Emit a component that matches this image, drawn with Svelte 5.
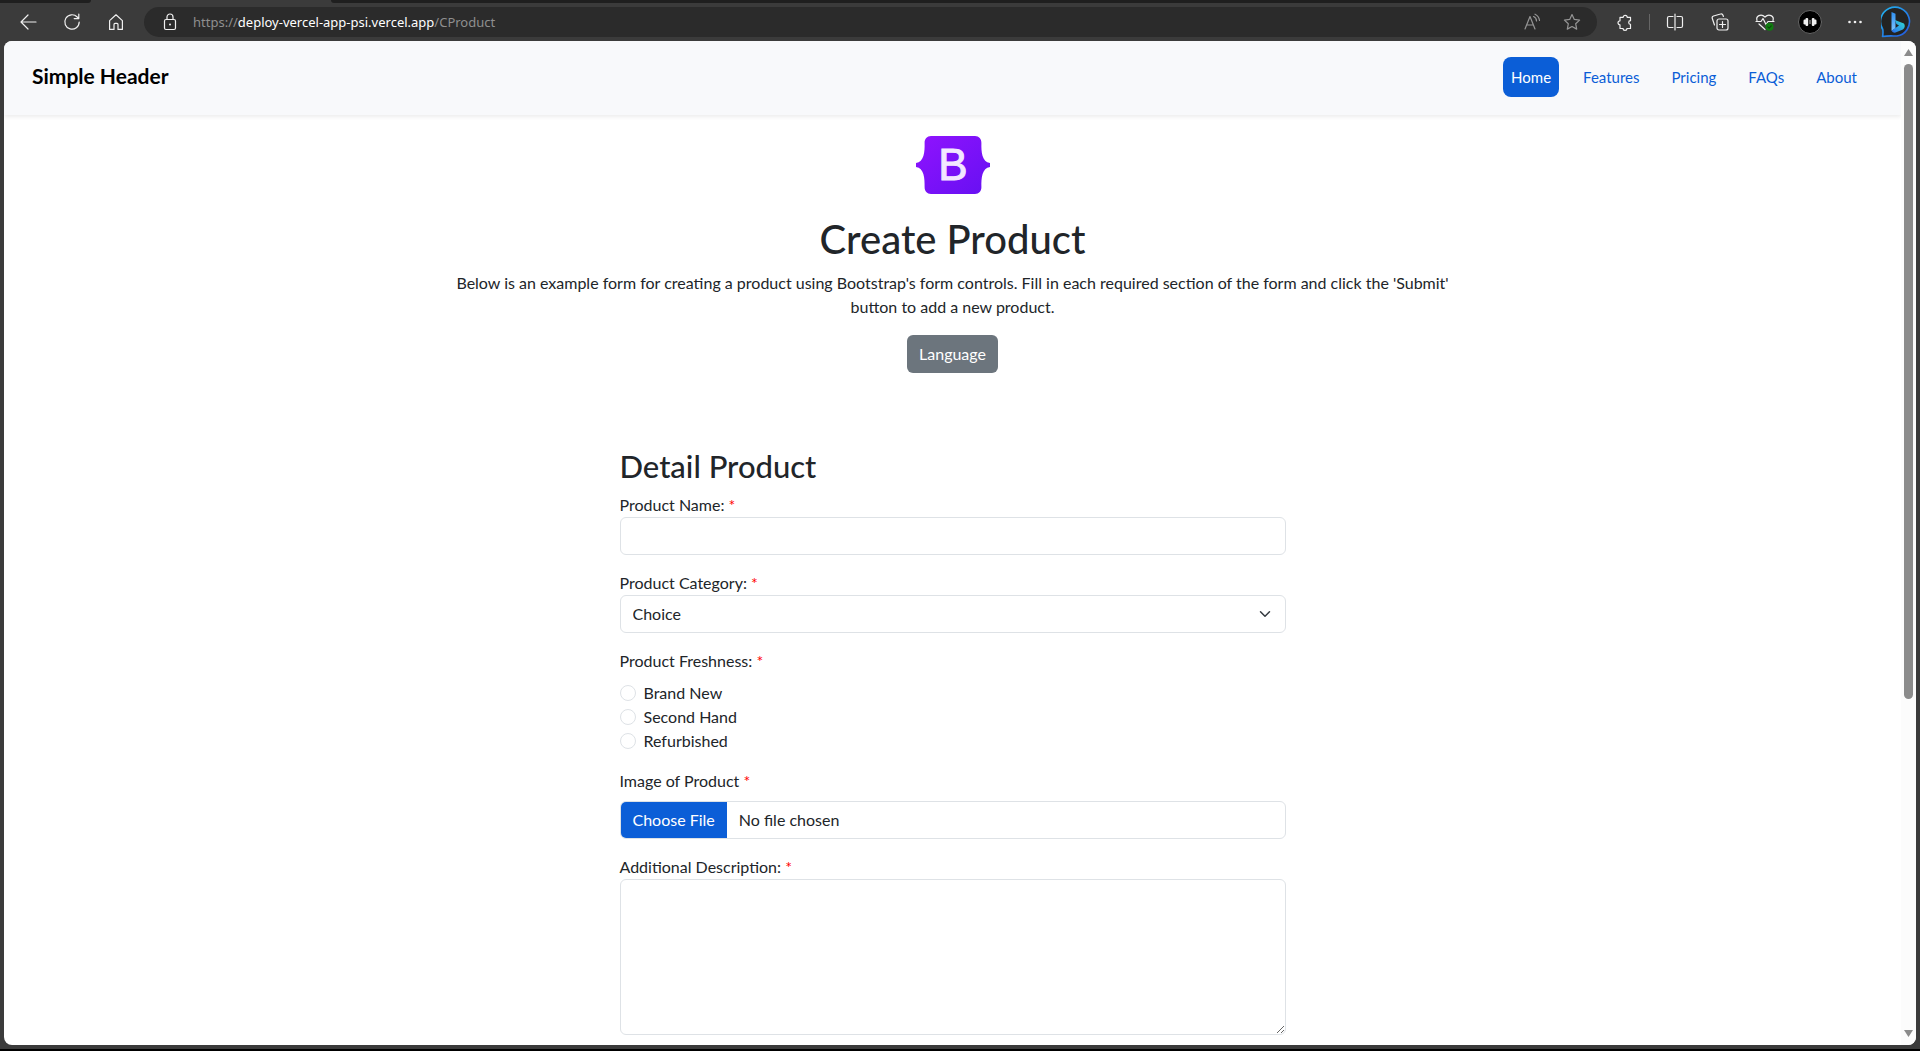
<script>
  const links = ['Home', 'Features', 'Pricing', 'FAQs', 'About'];
  const conditions = ['Brand New', 'Second Hand', 'Refurbished'];
  let active = $state('Home');
  let condition = $state('');
</script>

<div class="browser">
  <div class="tabstrip"><span class="tab-left"></span><span class="tab-gap"></span><span class="tab-right"></span></div>
  <div class="toolbar">
    <button class="tool" aria-label="Back">
      <svg width="18" height="18" viewBox="0 0 18 18"><path d="M17 9H2M9 2L2 9l7 7" /></svg>
    </button>
    <button class="tool" aria-label="Refresh">
      <svg width="18" height="18" viewBox="0 0 18 18"><path d="M16.2 9a7.2 7.2 0 1 1-2-5l1.4 1.4M15.8 1v4.6h-4.6" /></svg>
    </button>
    <button class="tool" aria-label="Home page">
      <svg width="18" height="18" viewBox="0 0 18 18"><path d="M2.6 7.6L9 1.8l6.4 5.8v8.8H11v-5a1 1 0 0 0-1-1H8a1 1 0 0 0-1 1v5H2.6z" /></svg>
    </button>
    <div class="address">
      <svg class="lock" width="16" height="18" viewBox="0 0 16 18"><rect x="2.5" y="6.5" width="11" height="10" rx="1.5" /><path d="M5 6.5V4a3 3 0 0 1 6 0v2.500" /><circle class="fill" cx="8" cy="11.500" r="1" /></svg>
      <span class="url">https://<b>deploy-vercel-app-psi.vercel.app</b>/CProduct</span>
      <button class="tool dim" aria-label="Read aloud">
        <svg width="18" height="18" viewBox="0 0 18 18"><path d="M2 16L7 3.500 12 16M3.600 12h6.800M10.500 3.500a5 5 0 0 1 3 4.500M12 1.200a8 8 0 0 1 4.500 6.300" /></svg>
      </button>
      <button class="tool dim" aria-label="Add to favorites">
        <svg width="18" height="18" viewBox="0 0 18 18"><path d="M9 1.500l2.300 4.900 5.300.7-3.900 3.700 1 5.300L9 13.500l-4.700 2.600 1-5.300L1.400 7.100l5.300-.7z" /></svg>
      </button>
    </div>
    <button class="tool ext" aria-label="Extensions">
      <svg width="18" height="18" viewBox="0 0 18 18"><path d="M4 4.300h3.200a2 2 0 1 1 4 0h3.300v3.400a1.800 1.800 0 1 0 0 3.600v4.200h-3.600a1.900 1.900 0 1 1-3.800 0H4v-3.700a2 2 0 1 1 0-4z" /></svg>
    </button>
    <span class="divider"></span>
    <button class="tool wide" aria-label="Split screen">
      <svg width="18" height="18" viewBox="0 0 18 18"><path d="M7 3.500H3a1.500 1.500 0 0 0-1.500 1.500v8A1.500 1.500 0 0 0 3 14.500h4M11 3.500h4a1.500 1.500 0 0 1 1.500 1.500v8a1.500 1.500 0 0 1-1.500 1.500h-4M9 1v16" /></svg>
    </button>
    <button class="tool wide" aria-label="Collections">
      <svg width="18" height="18" viewBox="0 0 18 18"><rect x="6" y="6" width="11" height="11" rx="2" /><path d="M11.500 8.500v6M8.500 11.500h6M3.500 12L1.300 5.500a2 2 0 0 1 1.200-2.500l7-2a2 2 0 0 1 2.500 1.200l.4 1.300" /></svg>
    </button>
    <button class="tool wide" aria-label="Browser essentials">
      <svg width="20" height="18" viewBox="0 0 20 18"><path d="M2 7.500C.5 3 6 .2 10 4c4-3.800 9.500-1 8 3.500M1 8.500h5l2-3 3 6 2-3h6M4 11l6 5.500" /><circle class="green" cx="14.500" cy="13.800" r="4" /><path class="tick" d="M12.800 13.800l1.300 1.300 2.200-2.200" /></svg>
    </button>
    <button class="tool wide" aria-label="Profile">
      <svg width="26" height="26" viewBox="0 0 26 26"><circle class="avatar" cx="13" cy="13" r="11.500" /><g class="fill"><rect x="6.500" y="10.500" width="3" height="5" rx="1.200" /><rect x="8.500" y="9" width="2.700" height="8" rx="1" /><rect x="16.500" y="10.500" width="3" height="5" rx="1.200" /><rect x="14.800" y="9" width="2.700" height="8" rx="1" /><rect x="12.600" y="11" width="0.800" height="4" /></g></svg>
    </button>
    <button class="tool wide" aria-label="Settings and more">
      <svg width="18" height="18" viewBox="0 0 18 18"><g class="fill"><circle cx="3.500" cy="9" r="1.300" /><circle cx="9" cy="9" r="1.300" /><circle cx="14.500" cy="9" r="1.300" /></g></svg>
    </button>
    <button class="tool bing" aria-label="Bing chat">
      <svg width="32" height="32" viewBox="0 0 32 32">
        <defs>
          <linearGradient id="ring" x1="0" y1="0" x2="1" y2="1"><stop offset="0" stop-color="#22b8f0" /><stop offset="1" stop-color="#2456e0" /></linearGradient>
          <linearGradient id="bolt" x1="0" y1="0" x2="0" y2="1"><stop offset="0" stop-color="#2f8ff0" /><stop offset="1" stop-color="#7cc4ff" /></linearGradient>
          <linearGradient id="bowl" x1="0" y1="1" x2="1" y2="0"><stop offset="0" stop-color="#2a6cf0" /><stop offset="1" stop-color="#30e0d0" /></linearGradient>
        </defs>
        <path class="bubble" d="M1.500 30.500c.8-3 .5-5 .3-7A14.500 14.500 0 1 1 16 30c-5 0-8-.5-14.500.5z" />
        <path fill="url(#bolt)" stroke="none" d="M10.500 6l4 1.700v14.500l-4 2.600z" />
        <path fill="url(#bowl)" stroke="none" d="M10.500 24.800l7.500-5.300-2.600-1.400-1.500-4 9 3.500c1.500 2 1 4.400-1 5.900L14.500 26.600q-2.500.4-4-1.800z" />
      </svg>
    </button>
  </div>

  <div class="window">
    <div class="page">
      <header>
        <a class="brand" href="#top">Simple Header</a>
        <nav>
          {#each links as link}
            <a href="#{link.toLowerCase()}" class:active={active === link} onclick={() => (active = link)}>{link}</a>
          {/each}
        </nav>
      </header>

      <main>
        <section class="intro">
          <svg class="logo" width="74" height="58" viewBox="0 0 74 58" role="img" aria-label="Bootstrap">
            <defs><linearGradient id="purple" x1="0" y1="0" x2="1" y2="1"><stop offset="0" stop-color="#9013fe" /><stop offset="1" stop-color="#6610f2" /></linearGradient></defs>
            <path fill="url(#purple)" d="M15 0h44c4 0 6.500 3 6.400 7-.2 9 .6 19 8.600 20v4c-8 1-8.800 11-8.600 20 .1 4-2.400 7-6.400 7H15c-4 0-6.500-3-6.400-7C8.800 42 8 32 0 31v-4c8-1 8.800-11 8.600-20C8.500 3 11 0 15 0z" />
            <text x="37" y="44" text-anchor="middle">B</text>
          </svg>
          <h1>Create Product</h1>
          <p>Below is an example form for creating a product using Bootstrap's form controls. Fill in each required section of the form and click the 'Submit' button to add a new product.</p>
          <button class="language">Language</button>
        </section>

        <form onsubmit={(e) => e.preventDefault()}>
          <h2>Detail Product</h2>
          <div class="field">
            <label for="name">Product Name: <span>*</span></label>
            <input class="control" id="name" type="text" />
          </div>
          <div class="field">
            <label for="category">Product Category: <span>*</span></label>
            <div class="select">
              <select class="control" id="category"><option>Choice</option></select>
              <svg width="12" height="12" viewBox="0 0 16 16"><path d="M2 5l6 6 6-6" /></svg>
            </div>
          </div>
          <fieldset class="field">
            <legend>Product Freshness: <span>*</span></legend>
            {#each conditions as item}
              <label class="choice"><input type="radio" name="freshness" value={item} bind:group={condition} />{item}</label>
            {/each}
          </fieldset>
          <div class="field">
            <label class="spaced" for="image">Image of Product <span>*</span></label>
            <input class="control" id="image" type="file" />
          </div>
          <div class="field">
            <label for="description">Additional Description: <span>*</span></label>
            <textarea class="control" id="description"></textarea>
          </div>
        </form>
      </main>
    </div>
    <div class="scrollbar">
      <svg width="9" height="7" viewBox="0 0 9 7"><path d="M4.500 0L9 7H0z" /></svg>
      <span class="track"><span class="thumb"></span></span>
      <svg width="9" height="7" viewBox="0 0 9 7"><path d="M0 0h9L4.500 7z" /></svg>
    </div>
  </div>
</div>

<style>
  :global(body) { background: #3b3b3b; }
  * { box-sizing: border-box; }
  .browser {
    display: flex;
    flex-direction: column;
    height: 100vh;
    overflow: hidden;
    background: #3b3b3b;
    border-bottom: 2px solid #000;
    font: 16px/24px Lato, sans-serif;
    color: #212529;
  }
  button { font: inherit; cursor: pointer; }

  .tabstrip { display: flex; height: 3px; flex: none; background: #3b3b3b; }
  .tab-left { width: 91px; border-bottom-right-radius: 3px; background: #1f1f1f; }
  .tab-gap { width: 240px; }
  .tab-right { flex: 1; border-bottom-left-radius: 3px; background: #1f1f1f; }

  .toolbar { display: flex; align-items: center; flex: none; height: 38px; padding: 0 3px 0 6px; }
  .tool {
    display: flex;
    align-items: center;
    justify-content: center;
    flex: none;
    width: 44px;
    height: 30px;
    padding: 0;
    border: 0;
    background: none;
    color: #f0f0f0;
  }
  .toolbar svg { fill: none; stroke: currentColor; stroke-width: 1.2; stroke-linejoin: round; stroke-linecap: round; }
  .toolbar svg .fill { fill: currentColor; stroke: none; }
  .toolbar svg .green { fill: #107c10; stroke: none; }
  .toolbar svg .tick { stroke: #0a4d0a; }
  .toolbar svg .avatar { fill: #000; stroke: #666; stroke-width: 1; }
  .toolbar svg .bubble { fill: #232323; stroke: url(#ring); stroke-width: 1.6; }
  .tool.dim { width: 40px; color: #959595; }
  .tool.wide { width: 45px; }
  .tool.ext { margin-left: 6px; }
  .tool.bing { width: 40px; }
  .divider { width: 1px; height: 16px; margin: 0 2px; background: #666; }
  .address {
    display: flex;
    align-items: center;
    flex: 1;
    min-width: 0;
    height: 30px;
    margin-left: 6px;
    padding: 0 5px 0 18px;
    border-radius: 15px;
    background: #2b2b2b;
    color: #f0f0f0;
  }
  .address .lock { flex: none; }
  .url { flex: 1; min-width: 0; margin-left: 15px; overflow: hidden; white-space: nowrap; font: 13px/20px "Noto Sans", sans-serif; color: #8f8f8f; }
  .url b { font-weight: 400; color: #fff; }

  .window { display: flex; flex: 1; min-height: 0; margin: 0 4px 4px; overflow: hidden; border-radius: 8px; background: #fff; }
  .page { flex: 1; min-width: 0; overflow: hidden; }
  .scrollbar { display: flex; flex-direction: column; align-items: center; flex: none; width: 15px; padding: 8px 0; background: #fcfcfc; }
  .scrollbar svg { flex: none; fill: #8b8b8b; }
  .track { flex: 1; width: 9px; padding: 8px 0 4px; }
  .thumb { display: block; height: 66%; border-radius: 5px; background: #8b8b8b; }

  header {
    display: flex;
    align-items: flex-start;
    justify-content: space-between;
    padding: 16px 36px 18px 28px;
    background: #f8f9fb;
    box-shadow: 0 2px 4px rgba(0, 0, 0, 0.075);
  }
  .brand { font-size: 21px; font-weight: 700; line-height: 38px; color: #000; text-decoration: none; }
  nav { display: flex; gap: 16px; font-size: 15px; }
  nav a { padding: 8px; border-radius: 8px; color: #0b5ed7; text-decoration: none; }
  nav a.active { background: #0b5ed7; color: #fff; }

  main { display: flex; flex-direction: column; align-items: center; padding: 21px 24px 24px; }
  .intro { display: flex; flex-direction: column; align-items: center; max-width: 1000px; text-align: center; }
  .logo text { fill: #f3e8ff; stroke: #f3e8ff; stroke-width: 1; font: 44px "Liberation Sans", sans-serif; }
  h1 { margin: 21px 0 8px; font-size: 40px; font-weight: 500; line-height: 48px; }
  p { margin: 0 0 16px; }
  .language { height: 38px; padding: 0 12px; border: 0; border-radius: 6px; background: #6c757d; color: #fff; }

  form { width: 100%; max-width: 666px; margin-top: 74px; }
  h2 { margin: 0 0 8px; font-size: 31px; font-weight: 500; line-height: 38px; }
  .field { display: block; margin: 0 0 16px; padding: 0; border: 0; }
  label, legend { display: block; padding: 0; }
  label span, legend span { color: #f00; }
  legend, .spaced { margin-bottom: 8px; }
  .control {
    display: block;
    width: 100%;
    height: 38px;
    margin: 0;
    padding: 6px 12px;
    border: 1px solid #dee2e6;
    border-radius: 6px;
    background: #fff;
    color: #212529;
    font: inherit;
    appearance: none;
  }
  textarea.control { height: 156px; resize: vertical; }
  .select { display: grid; align-items: center; }
  .select > * { grid-area: 1 / 1; }
  .select svg { justify-self: end; margin-right: 15px; fill: none; stroke: #343a40; stroke-width: 2; stroke-linecap: round; stroke-linejoin: round; pointer-events: none; }
  .choice { display: flex; align-items: center; gap: 8px; }
  .choice input { appearance: none; width: 16px; height: 16px; margin: 0; border: 1px solid #dee2e6; border-radius: 50%; background: #fff; }
  .choice input:checked { border: 5px solid #0b5ed7; }
  input[type='file'] { padding: 0; overflow: hidden; line-height: 36px; }
  input[type='file']::file-selector-button { height: 36px; margin: 0 12px 0 0; padding: 0 12px; border: 0; background: #0b5ed7; color: #fff; font: inherit; }
</style>
